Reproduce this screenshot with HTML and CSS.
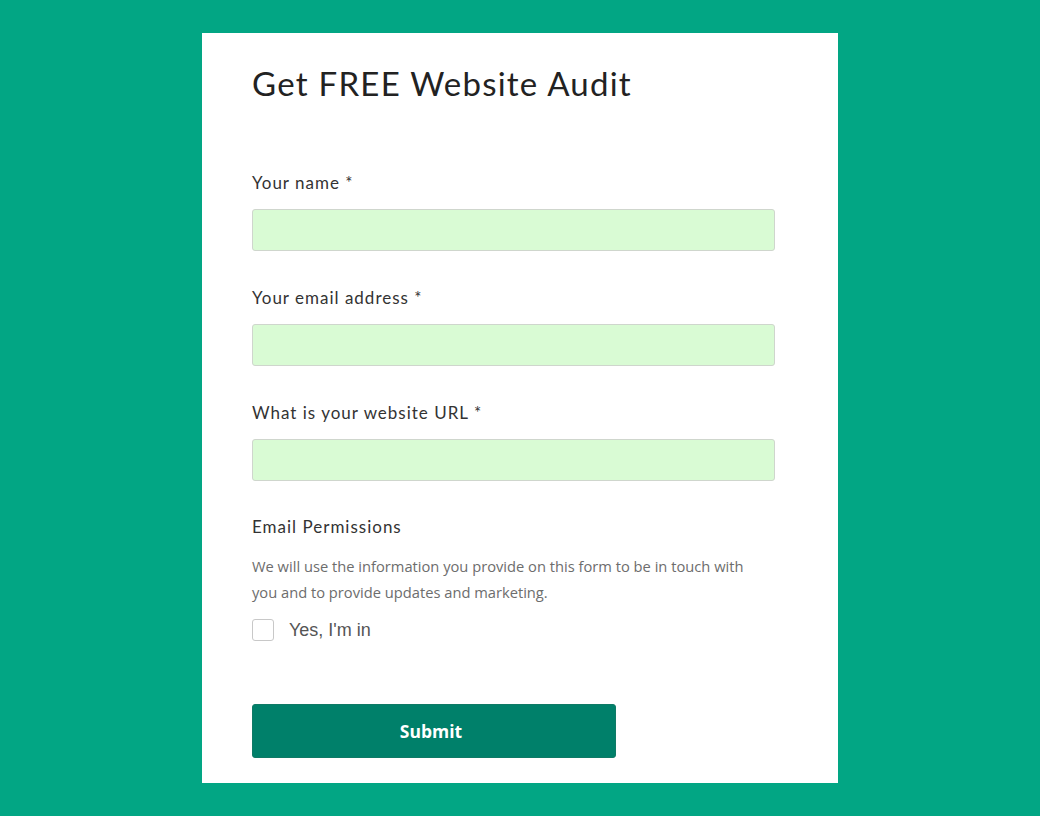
FILE: index.html
```html
<!DOCTYPE html>
<html lang="en">
<head>
<meta charset="utf-8">
<title>Get FREE Website Audit</title>
<link rel="stylesheet" href="styles.css">
</head>
<body>
<main class="card">
  <h1 class="title">Get FREE Website Audit</h1>
  <form class="form">
    <div class="field">
      <label class="label" for="name">Your name *</label>
      <input class="input" id="name" type="text">
    </div>
    <div class="field">
      <label class="label" for="email">Your email address *</label>
      <input class="input" id="email" type="email">
    </div>
    <div class="field">
      <label class="label" for="url">What is your website URL *</label>
      <input class="input" id="url" type="text">
    </div>
    <div class="perm">
      <div class="label">Email Permissions</div>
      <p class="note">We will use the information you provide on this form to be in touch with you and to provide updates and marketing.</p>
      <label class="check"><span class="box"></span><span class="check-text">Yes, I'm in</span></label>
    </div>
    <button class="submit" type="button">Submit</button>
  </form>
</main>
</body>
</html>
```
FILE: styles.css
```css
* { box-sizing: border-box; }
html, body { margin: 0; padding: 0; }
body {
  background: #02a684;
  width: 1040px;
  height: 816px;
  overflow: hidden;
  padding-top: 33px;
}
.card {
  margin-left: 202px;
  width: 636px;
  height: 750px;
  background: #fff;
  padding: 30px 63px 0 50px;
}
.title {
  margin: 0;
  font-family: "Lato", "Open Sans", sans-serif;
  font-weight: 400;
  font-size: 33px;
  line-height: 40px;
  letter-spacing: 1.25px;
  color: #222;
}
.form {
  margin-top: 68px;
  display: flex;
  flex-direction: column;
}
.field {
  display: flex;
  flex-direction: column;
  gap: 14px;
  margin-bottom: 35px;
}
.label {
  font-family: "Lato", "Open Sans", sans-serif;
  font-size: 17px;
  line-height: 24px;
  letter-spacing: 1px;
  color: #333;
}
.input {
  width: 523px;
  height: 42px;
  background: #d9fbd4;
  border: 1px solid #cfd6cd;
  border-radius: 3px;
  margin: 0;
}
.perm { display: flex; flex-direction: column; margin-top: -1px; }
.note {
  margin: 14px 0 11px;
  font-family: "Open Sans", sans-serif;
  font-size: 14.7px;
  line-height: 26px;
  color: #6d6d6d;
  width: 505px;
}
.check {
  display: flex;
  align-items: center;
  gap: 15px;
  height: 28px;
}
.box {
  width: 22px;
  height: 22px;
  border: 1px solid #c8c8c8;
  border-radius: 3px;
  background: #fff;
}
.check-text {
  font-family: "Liberation Sans", Arial, sans-serif;
  font-size: 18px;
  color: #555;
}
.submit {
  margin-top: 60px;
  width: 364px;
  height: 54px;
  background: #00806a;
  border: 1px solid #0f7a66;
  border-radius: 3px;
  color: #fff;
  font-family: "Open Sans", sans-serif;
  font-weight: 700;
  font-size: 17.5px;
  padding: 0 6px 0 0;
}
```
